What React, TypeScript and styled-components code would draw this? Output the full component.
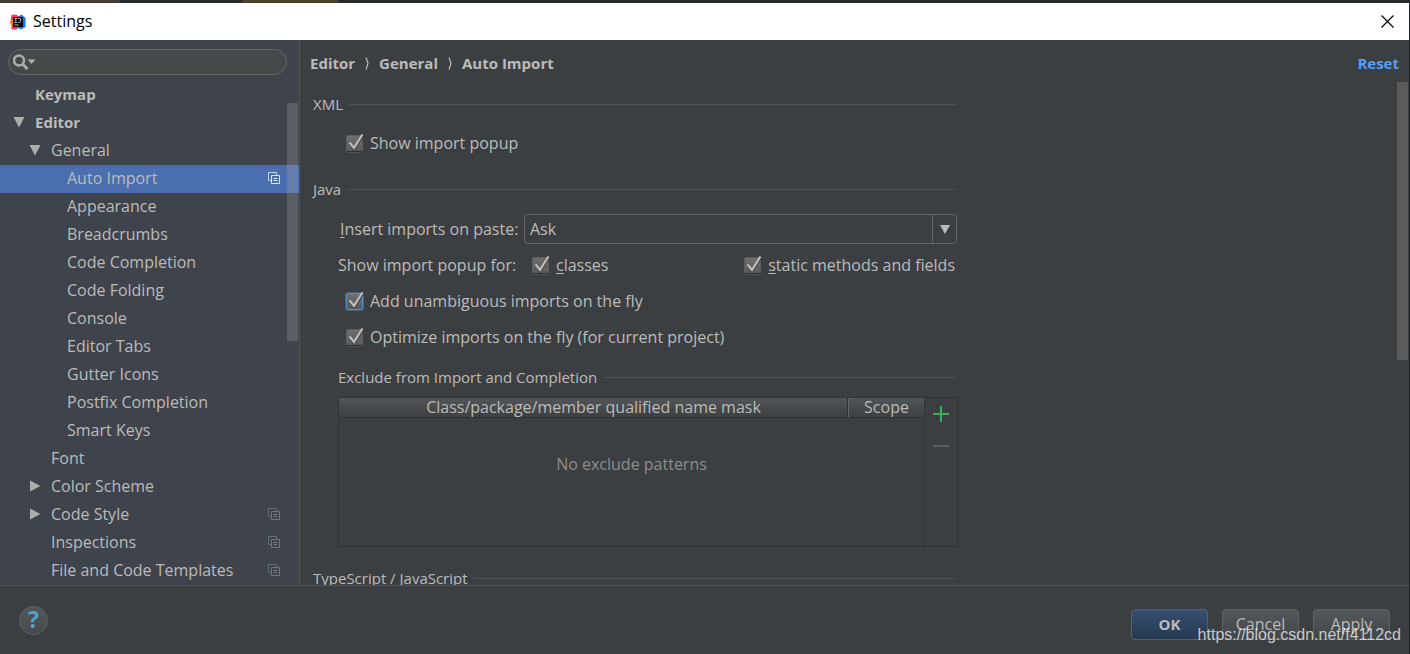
import React from "react";
import styled, { createGlobalStyle, css } from "styled-components";

const GlobalStyle = createGlobalStyle`
  *, *::before, *::after { box-sizing: border-box; }
  body {
    margin: 0;
    background: #3c3f41;
    color: #bbbbbb;
    font: 16px/22px "Open Sans", "Noto Sans", sans-serif;
  }
  button, input, select { font: inherit; color: inherit; margin: 0; }
`;

const Window = styled.div`
  position: relative;
  display: flex;
  flex-direction: column;
  height: 100vh;
  min-height: 400px;
  overflow: hidden;
  border-right: 1px solid #1f2224;
`;

const DesktopStrip = styled.div`
  flex: none;
  height: 3px;
  background: linear-gradient(
    90deg,
    #453e3b 0 120px,
    #272b2e 120px 242px,
    #47432f 242px 338px,
    #272b2e 338px
  );
`;

const TitleBar = styled.header`
  flex: none;
  display: flex;
  align-items: center;
  gap: 7px;
  height: 37px;
  padding: 0 15px 0 10px;
  background: #ffffff;
  color: #000000;
`;

const Title = styled.h1`
  flex: 1;
  margin: 0;
  padding-bottom: 2px;
  font-size: 16px;
  font-weight: 400;
`;

const IconButton = styled.button`
  display: flex;
  align-items: center;
  justify-content: center;
  padding: 0;
  border: 0;
  background: none;
  cursor: pointer;
`;

const Body = styled.div`
  flex: 1;
  display: flex;
  min-height: 0;
`;

const Sidebar = styled.nav`
  position: relative;
  flex: none;
  display: flex;
  flex-direction: column;
  width: 300px;
  border-right: 1px solid #515557;
  background: #3f434c;
  overflow: hidden;
`;

const SearchBox = styled.label`
  flex: none;
  display: flex;
  align-items: center;
  gap: 4px;
  height: 26px;
  margin: 9px 12px 6px 8px;
  padding: 0 10px 0 4px;
  border: 1px solid #646767;
  border-radius: 13px;
  background: #45494a;
`;

const SearchInput = styled.input`
  flex: 1;
  min-width: 0;
  padding: 0;
  border: 0;
  outline: 0;
  background: transparent;
`;

const Tree = styled.ul`
  flex: 1;
  min-height: 0;
  margin: 0;
  padding: 0;
  overflow: hidden;
  list-style: none;
`;

const TreeRow = styled.li<{ $depth: number; $selected?: boolean; $bold?: boolean }>`
  display: flex;
  align-items: center;
  height: 28px;
  padding: 0 19px 2px ${({ $depth }) => 11 + $depth * 16}px;
  font-size: ${({ $bold }) => ($bold ? 15 : 16)}px;
  font-weight: ${({ $bold }) => ($bold ? 700 : 400)};
  background: ${({ $selected }) => ($selected ? "#4b6eaf" : "transparent")};
`;

const TwistySlot = styled.span`
  flex: none;
  display: flex;
  align-items: center;
  justify-content: center;
  width: 16px;
  margin-right: 8px;
`;

const TreeLabel = styled.span`
  flex: 1;
  white-space: nowrap;
`;

const ScrollThumb = styled.div<{ $top: number; $height: number; $color: string }>`
  position: absolute;
  top: ${({ $top }) => $top}px;
  right: 1px;
  width: 11px;
  height: ${({ $height }) => $height}px;
  background: ${({ $color }) => $color};
`;

const Main = styled.main`
  position: relative;
  flex: 1;
  display: flex;
  flex-direction: column;
  min-width: 0;
`;

const MainHeader = styled.div`
  flex: none;
  display: flex;
  align-items: center;
  justify-content: space-between;
  height: 42px;
  padding: 4px 10px 0 10px;
  font-size: 15px;
  font-weight: 700;
`;

const Breadcrumbs = styled.div`
  display: flex;
  align-items: center;
  gap: 9px;
`;

const ResetLink = styled.a`
  color: #589df6;
  text-decoration: none;
`;

const Content = styled.div`
  flex: 1;
  min-height: 0;
  padding: 11px 24px 0 13px;
  overflow: hidden;
`;

const Section = styled.section<{ $after?: number }>`
  max-width: 645px;
  margin-bottom: ${({ $after }) => $after ?? 0}px;
`;

const SubSection = styled.section`
  padding-top: 11px;
`;

const SectionTitle = styled.h2<{ $after?: number }>`
  display: flex;
  align-items: center;
  gap: 6px;
  margin: 0 2px ${({ $after }) => $after ?? 0}px 0;
  font-size: 15px;
  font-weight: 400;
  line-height: 22px;

  &::after {
    content: "";
    flex: 1;
    height: 1px;
    background: #515151;
  }
`;

const Row = styled.div`
  display: flex;
  align-items: center;
  height: 36px;
`;

const Indented = styled.div`
  padding-left: 25px;
`;

const FieldLabel = styled.label`
  flex: none;
  width: 186px;
  padding-left: 2px;
  white-space: nowrap;
`;

const GroupLabel = styled.span`
  flex: none;
  width: 194px;
  white-space: nowrap;
`;

const Mnemonic = styled.span`
  text-decoration: underline;
  text-decoration-thickness: 1px;
  text-decoration-skip-ink: none;
  text-underline-offset: 2px;
`;

const SelectBox = styled.span`
  flex: 1;
  display: grid;
  height: 30px;
  margin-right: 1px;
  border: 1px solid #646464;
  border-radius: 4px;

  & > * { grid-area: 1 / 1; }
`;

const Select = styled.select`
  appearance: none;
  padding: 0 30px 0 5px;
  border: 0;
  outline: 0;
  background: transparent;
`;

const SelectArrow = styled.span`
  justify-self: end;
  display: flex;
  align-items: center;
  justify-content: center;
  width: 24px;
  border-left: 1px solid #646464;
  pointer-events: none;
`;

const CheckLabel = styled.label<{ $push?: boolean }>`
  display: flex;
  align-items: center;
  gap: 6px;
  white-space: nowrap;
  ${({ $push }) => $push && css`
    margin-left: auto;
    margin-right: 3px;
  `}
`;

const CheckSlot = styled.span`
  display: grid;
  width: 18px;
  height: 20px;
  padding-top: 2px;

  & > * { grid-area: 1 / 1; }
  & > svg { pointer-events: none; overflow: visible; }
`;

const CheckInput = styled.input<{ $focused?: boolean }>`
  appearance: none;
  width: 17px;
  height: 17px;
  border: 1px solid ${({ $focused }) => ($focused ? "#5a8cc4" : "#5c5f61")};
  border-bottom-color: ${({ $focused }) => ($focused ? "#5a8cc4" : "#2f3133")};
  border-radius: 2px;
  background: linear-gradient(#6e6e6e, #5a5a5a);
  box-shadow: ${({ $focused }) => ($focused ? "0 0 0 1px #41607f" : "0 1px 0 #4f5254")};

  &:not(:checked) + svg { display: none; }
`;

const CheckRow = styled(Row)`
  padding-left: 8px;
`;

const TablePanel = styled.div`
  display: flex;
  height: 150px;
  border: 1px solid #323232;
`;

const MaskTable = styled.table`
  flex: 1;
  height: 148px;
  border-collapse: separate;
  border-spacing: 0;
  table-layout: fixed;
`;

const HeadCell = styled.th<{ $width?: number }>`
  width: ${({ $width }) => ($width ? `${$width}px` : "auto")};
  height: 20px;
  padding: 0;
  border-bottom: 1px solid #2f3031;
  background: linear-gradient(#525658, #3d3f41);
  font-weight: 400;
  line-height: 19px;
  white-space: nowrap;

  & + & {
    border-left: 1px solid #66696b;
    box-shadow: -1px 0 0 #2f3031;
  }
`;

const EmptyCell = styled.td`
  padding: 0 0 36px;
  color: #8c8c8c;
  text-align: center;
`;

const TableTools = styled.div`
  flex: none;
  display: flex;
  flex-direction: column;
  width: 33px;
  border-left: 1px solid #323232;
`;

const ToolButton = styled(IconButton)`
  height: 32px;
`;

const Footer = styled.footer`
  flex: none;
  display: flex;
  align-items: flex-start;
  justify-content: space-between;
  height: 69px;
  padding: 20px 19px 0;
  border-top: 1px solid #515557;
`;

const HelpButton = styled.button`
  width: 29px;
  height: 29px;
  padding: 0 0 2px;
  border: 1px solid #5e6162;
  border-radius: 50%;
  background: linear-gradient(#525758, #45494b);
  color: #4fa3cf;
  font-size: 23px;
  font-weight: 700;
  line-height: 25px;
  cursor: pointer;
`;

const DialogButtons = styled.div`
  display: flex;
  gap: 14px;
  padding-top: 3px;
`;

const DialogButton = styled.button<{ $primary?: boolean }>`
  width: 77px;
  height: 31px;
  padding: 0 0 2px;
  border: 1px solid #5e6163;
  border-radius: 4px;
  background: ${({ $primary }) =>
    $primary ? "linear-gradient(#365070, #253850)" : "linear-gradient(#53585a, #414547)"};
  font-size: ${({ $primary }) => ($primary ? 15 : 16)}px;
  font-weight: ${({ $primary }) => ($primary ? 700 : 400)};
  cursor: pointer;
`;

const Watermark = styled.span`
  position: absolute;
  right: 8px;
  bottom: 8px;
  color: rgba(255, 255, 255, 0.72);
  font: 16px/22px "Liberation Sans", Arial, sans-serif;
  pointer-events: none;
`;

const AppIcon = () => (
  <svg width="16" height="16" viewBox="0 0 16 16" aria-hidden="true">
    <path d="M1.500 1 6 .5l4 2.500-3 8-2 4.500-3.500-.5.5-3L.5 9z" fill="#fe315d" />
    <path d="M0 7 3 5v6l-2 1z" fill="#f97a12" />
    <path d="M9 2l2.500-1.500L15.500 4v9L11 15.500 6 13z" fill="#087cfa" />
    <path d="M1.500 12.500l5 0 1.500 2-3 1-3.500-.5z" fill="#fe315d" />
    <rect x="3" y="3" width="10" height="10" fill="#0b0b0d" />
    <path d="M4.500 4.500h2.500M5.750 4.500v4M4.500 8.500h2.500M8 4.500h2.500v3q0 1-1 1H8" fill="none" stroke="#bbb" strokeWidth=".9" />
    <path d="M4.500 11h4" stroke="#bbb" />
  </svg>
);

const CloseIcon = () => (
  <svg width="13" height="13" viewBox="0 0 13 13" aria-hidden="true">
    <path d="M.5.5l12 12M12.500.5l-12 12" stroke="#000" strokeWidth="1.200" />
  </svg>
);

const SearchIcon = () => (
  <svg width="23" height="16" viewBox="0 0 23 16" aria-hidden="true">
    <circle cx="6" cy="6.500" r="5" fill="none" stroke="#adadad" strokeWidth="2.400" />
    <path d="M9.500 10l5 5" stroke="#adadad" strokeWidth="3" />
    <path d="M14.500 5.500h8l-4 4.500z" fill="#adadad" />
  </svg>
);

const Twisty = ({ open }: { open: boolean }) => (
  <svg width="12" height="12" viewBox="0 0 12 12" aria-hidden="true">
    <path d={open ? "M.5 1h11L6 11.500z" : "M1 .5v11L11.500 6z"} fill="#adadad" />
  </svg>
);

const CopyIcon = ({ active }: { active?: boolean }) => (
  <svg width="12" height="12" viewBox="0 0 12 12" aria-hidden="true" fill="none">
    <path d="M3 8.500H.5v-8h8V3" stroke={active ? "#b9dcf0" : "#61717c"} />
    <path d="M3.500 3.500h8v8h-8z" stroke={active ? "#e3e5e8" : "#737678"} />
    <path d="M5.500 6.500h4M5.500 8.500h4" stroke={active ? "#e3e5e8" : "#737678"} />
  </svg>
);

const Chevron = () => (
  <svg width="6" height="13" viewBox="0 0 6 13" aria-hidden="true">
    <path d="M2 .5l2 6-2 6" fill="none" stroke="#bbb" strokeWidth="1.200" />
  </svg>
);

const Tick = () => (
  <svg width="18" height="18" viewBox="0 0 18 18" aria-hidden="true" fill="none">
    <path d="M3.500 8.500l4.500 6 9-14" stroke="#2e2e2e" strokeWidth="2" />
    <path d="M3.500 7.500l4.500 5.500L16.500-.5" stroke="#bdbdbd" strokeWidth="2.300" />
  </svg>
);

interface CheckProps {
  label: string;
  mnemonic?: boolean;
  focused?: boolean;
  push?: boolean;
}

const Check = ({ label, mnemonic, focused, push }: CheckProps) => (
  <CheckLabel $push={push}>
    <CheckSlot>
      <CheckInput type="checkbox" defaultChecked $focused={focused} />
      <Tick />
    </CheckSlot>
    {mnemonic ? (
      <span>
        <Mnemonic>{label[0]}</Mnemonic>
        {label.slice(1)}
      </span>
    ) : (
      <span>{label}</span>
    )}
  </CheckLabel>
);

interface TreeItem {
  label: string;
  depth: number;
  open?: boolean;
  bold?: boolean;
  selected?: boolean;
  project?: boolean;
}

const treeItems: TreeItem[] = [
  { label: "Keymap", depth: 0, bold: true },
  { label: "Editor", depth: 0, bold: true, open: true },
  { label: "General", depth: 1, open: true },
  { label: "Auto Import", depth: 2, selected: true, project: true },
  { label: "Appearance", depth: 2 },
  { label: "Breadcrumbs", depth: 2 },
  { label: "Code Completion", depth: 2 },
  { label: "Code Folding", depth: 2 },
  { label: "Console", depth: 2 },
  { label: "Editor Tabs", depth: 2 },
  { label: "Gutter Icons", depth: 2 },
  { label: "Postfix Completion", depth: 2 },
  { label: "Smart Keys", depth: 2 },
  { label: "Font", depth: 1 },
  { label: "Color Scheme", depth: 1, open: false },
  { label: "Code Style", depth: 1, open: false, project: true },
  { label: "Inspections", depth: 1, project: true },
  { label: "File and Code Templates", depth: 1, project: true },
];

export default function App() {
  return (
    <Window>
      <GlobalStyle />
      <DesktopStrip />
      <TitleBar>
        <AppIcon />
        <Title>Settings</Title>
        <IconButton type="button" aria-label="Close">
          <CloseIcon />
        </IconButton>
      </TitleBar>

      <Body>
        <Sidebar>
          <SearchBox>
            <SearchIcon />
            <SearchInput type="text" aria-label="Search settings" />
          </SearchBox>
          <Tree>
            {treeItems.map((item) => (
              <TreeRow
                key={item.label}
                $depth={item.depth}
                $bold={item.bold}
                $selected={item.selected}
              >
                <TwistySlot>
                  {item.open !== undefined && <Twisty open={item.open} />}
                </TwistySlot>
                <TreeLabel>{item.label}</TreeLabel>
                {item.project && <CopyIcon active={item.selected} />}
              </TreeRow>
            ))}
          </Tree>
          <ScrollThumb $top={63} $height={238} $color="rgba(166, 166, 166, 0.28)" />
        </Sidebar>

        <Main>
          <MainHeader>
            <Breadcrumbs>
              <span>Editor</span>
              <Chevron />
              <span>General</span>
              <Chevron />
              <span>Auto Import</span>
            </Breadcrumbs>
            <ResetLink href="#reset">Reset</ResetLink>
          </MainHeader>

          <Content>
            <Section $after={17}>
              <SectionTitle $after={10}>XML</SectionTitle>
              <Indented>
                <CheckRow>
                  <Check label="Show import popup" />
                </CheckRow>
              </Indented>
            </Section>

            <Section $after={20}>
              <SectionTitle $after={11}>Java</SectionTitle>
              <Indented>
                <Row>
                  <FieldLabel htmlFor="insert-imports">
                    <Mnemonic>I</Mnemonic>nsert imports on paste:
                  </FieldLabel>
                  <SelectBox>
                    <Select id="insert-imports" defaultValue="Ask">
                      <option>Ask</option>
                      <option>All</option>
                      <option>None</option>
                    </Select>
                    <SelectArrow>
                      <svg width="10" height="9" viewBox="0 0 10 9" aria-hidden="true">
                        <path d="M0 0h10L5 9z" fill="#bbb" />
                      </svg>
                    </SelectArrow>
                  </SelectBox>
                </Row>
                <Row>
                  <GroupLabel>Show import popup for:</GroupLabel>
                  <Check label="classes" mnemonic />
                  <Check label="static methods and fields" mnemonic push />
                </Row>
                <CheckRow>
                  <Check label="Add unambiguous imports on the fly" focused />
                </CheckRow>
                <CheckRow>
                  <Check label="Optimize imports on the fly (for current project)" />
                </CheckRow>
                <SubSection>
                  <SectionTitle as="h3" $after={9}>
                    Exclude from Import and Completion
                  </SectionTitle>
                  <TablePanel>
                    <MaskTable>
                      <thead>
                        <tr>
                          <HeadCell>Class/package/member qualified name mask</HeadCell>
                          <HeadCell $width={76}>Scope</HeadCell>
                        </tr>
                      </thead>
                      <tbody>
                        <tr>
                          <EmptyCell colSpan={2}>No exclude patterns</EmptyCell>
                        </tr>
                      </tbody>
                    </MaskTable>
                    <TableTools>
                      <ToolButton type="button" aria-label="Add">
                        <svg width="16" height="16" viewBox="0 0 16 16" aria-hidden="true">
                          <path d="M8 0v16M0 8h16" stroke="#36b455" strokeWidth="2" />
                        </svg>
                      </ToolButton>
                      <ToolButton type="button" aria-label="Remove">
                        <svg width="16" height="16" viewBox="0 0 16 16" aria-hidden="true">
                          <path d="M0 8h16" stroke="#5a5c5e" strokeWidth="2" />
                        </svg>
                      </ToolButton>
                    </TableTools>
                  </TablePanel>
                </SubSection>
              </Indented>
            </Section>

            <Section>
              <SectionTitle>TypeScript / JavaScript</SectionTitle>
            </Section>
          </Content>
          <ScrollThumb $top={42} $height={278} $color="#5a5b5c" />
        </Main>
      </Body>

      <Footer>
        <HelpButton type="button" aria-label="Help">?</HelpButton>
        <DialogButtons>
          <DialogButton type="button" $primary>OK</DialogButton>
          <DialogButton type="button">Cancel</DialogButton>
          <DialogButton type="button">Apply</DialogButton>
        </DialogButtons>
      </Footer>
      <Watermark>https://blog.csdn.net/f4112cd</Watermark>
    </Window>
  );
}
